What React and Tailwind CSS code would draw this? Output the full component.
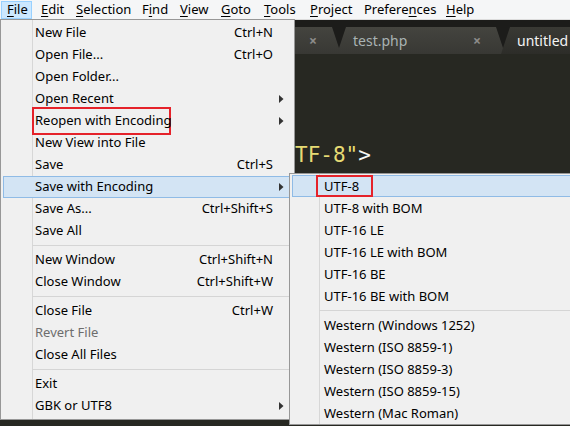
import React from "react";

const FONT = { fontFamily: '"Noto Sans", "Open Sans", sans-serif' };

function Mn({ text, u }) {
  return (
    <span>
      {text.slice(0, u)}
      <span className="underline underline-offset-[2px]">{text[u]}</span>
      {text.slice(u + 1)}
    </span>
  );
}

const barItems = [
  { t: "File", u: 0, w: "w-[31px]", active: true },
  { t: "Edit", u: 0, w: "w-[35px]" },
  { t: "Selection", u: 0, w: "w-[66px]" },
  { t: "Find", u: 1, w: "w-[38px]" },
  { t: "View", u: 0, w: "w-[41px]" },
  { t: "Goto", u: 0, w: "w-[43px]" },
  { t: "Tools", u: 0, w: "w-[46px]" },
  { t: "Project", u: 0, w: "w-[54px]" },
  { t: "Preferences", u: 7, w: "w-[82px]" },
  { t: "Help", u: 0, w: "w-[40px]" },
];

function Arrow() {
  return (
    <svg width="5" height="8" viewBox="0 0 5 8" className="block">
      <path d="M0 0 L4.5 4 L0 8 Z" fill="#333" />
    </svg>
  );
}

function Row({ label, sc, arrow, hl, disabled, box }) {
  return (
    <div
      className={
        "relative mx-[2px] flex h-[22px] items-center border pl-[31px] " +
        (hl ? "border-[#8fbbe6] bg-[#d3e4f4]" : "border-transparent")
      }
    >
      {box && (
        <span className="absolute left-[28px] top-[-4px] h-[28px] w-[139px] border-2 border-[#e5222a]" />
      )}
      <span
        className={
          "relative flex-1 whitespace-nowrap " +
          (disabled ? "text-[#6d6d6d]" : "text-black")
        }
      >
        {label}
      </span>
      <span className="whitespace-nowrap text-black">{sc}</span>
      <span className="flex w-[18px] justify-start pl-[6px]">{arrow && <Arrow />}</span>
    </div>
  );
}

function Sep({ left, h = "h-[7px]" }) {
  return (
    <div className={"flex items-center pr-[2px] " + h + " " + left}>
      <div className="h-px w-full bg-[#d5d5d5]" />
    </div>
  );
}

function SubRow({ label, hl, box }) {
  return (
    <div
      className={
        "relative ml-[2px] flex h-[22px] items-center border border-r-0 pl-[31px] pt-[1px] " +
        (hl ? "border-[#8fbbe6] bg-[#d3e4f4]" : "border-transparent")
      }
    >
      {box && (
        <span className="absolute left-[23px] top-[-1px] h-[22px] w-[57px] border-2 border-[#e5222a]" />
      )}
      <span className="relative whitespace-nowrap text-black">{label}</span>
    </div>
  );
}

function Tab({ label, w, active, first }) {
  return (
    <div
      className={
        "flex h-[27px] shrink-0 items-center justify-between [clip-path:polygon(9px_0,calc(100%-9px)_0,100%_100%,0_100%)] " +
        w +
        (first ? "" : " -ml-[4px]") +
        (active
          ? " bg-[linear-gradient(#393934,#2d2d29)] text-[#f4f4f4]"
          : " bg-[linear-gradient(#44443f,#383834)] text-[#a9b3b3]")
      }
    >
      <span className="pl-[16px] text-[14px]">{label}</span>
      {!active && <span className="pr-[24px] text-[14px] font-bold text-[#8d8d8a]">×</span>}
    </div>
  );
}

export default function App() {
  return (
    <div className="relative h-[426px] w-[570px] overflow-hidden bg-[#272822] text-[13px]" style={FONT}>
      {/* menu bar */}
      <div className="flex h-[20px] items-center border-b border-[#dcdcdc] bg-[#f5f6f7] pl-[1px]">
        {barItems.map((b, i) => (
          <div
            key={b.t}
            className={
              "flex h-[18px] shrink-0 items-center border pl-[5px] text-black " +
              b.w +
              (i === 1 ? " ml-[3px]" : "") +
              (b.active ? " border-[#99d1ff] bg-[#cce8ff]" : " border-transparent")
            }
          >
            <Mn text={b.t} u={b.u} />
          </div>
        ))}
      </div>

      {/* editor */}
      <div className="flex flex-col">
        <div className="flex h-[34px] items-end overflow-hidden bg-[#1c1c1a] pl-[180px]">
          <Tab label="" w="w-[161px]" first />
          <Tab label="test.php" w="w-[168px]" />
          <Tab label="untitled" w="w-[200px]" active />
        </div>
        <div className="h-[400px] bg-[#272822] pl-[295px] pt-[88px]">
          <div
            className="text-[21px] leading-[26px] text-[#e6db74]"
            style={{ fontFamily: '"DejaVu Sans Mono", monospace' }}
          >
            TF-8"<span className="text-[#f8f8f2]">&gt;</span>
          </div>
        </div>
      </div>

      {/* File menu */}
      <div className="absolute left-0 top-[19px] w-[295px] border border-[#979797] bg-[#f0f0f0] pb-[2px] pt-[2px]">
        <div className="absolute bottom-0 left-[31px] top-0 w-px bg-[#d7d7d7]" />
        <div className="relative">
          <Row label="New File" sc="Ctrl+N" />
          <Row label="Open File..." sc="Ctrl+O" />
          <Row label="Open Folder..." />
          <Row label="Open Recent" arrow />
          <Row label="Reopen with Encoding" arrow box />
          <Row label="New View into File" />
          <Row label="Save" sc="Ctrl+S" />
          <Row label="Save with Encoding" arrow hl />
          <Row label="Save As..." sc="Ctrl+Shift+S" />
          <Row label="Save All" />
          <Sep left="pl-[31px]" />
          <Row label="New Window" sc="Ctrl+Shift+N" />
          <Row label="Close Window" sc="Ctrl+Shift+W" />
          <Sep left="pl-[31px]" />
          <Row label="Close File" sc="Ctrl+W" />
          <Row label="Revert File" disabled />
          <Row label="Close All Files" />
          <Sep left="pl-[31px]" />
          <Row label="Exit" />
          <Row label="GBK or UTF8" arrow />
        </div>
      </div>

      {/* Encoding submenu */}
      <div className="absolute left-[289px] top-[173px] w-[300px] border border-[#979797] bg-[#f0f0f0] pt-[1px]">
        <div className="absolute bottom-0 left-[29px] top-0 w-px bg-[#d7d7d7]" />
        <div className="relative">
          <SubRow label="UTF-8" hl box />
          <SubRow label="UTF-8 with BOM" />
          <SubRow label="UTF-16 LE" />
          <SubRow label="UTF-16 LE with BOM" />
          <SubRow label="UTF-16 BE" />
          <SubRow label="UTF-16 BE with BOM" />
          <Sep left="pl-[29px]" />
          <SubRow label="Western (Windows 1252)" />
          <SubRow label="Western (ISO 8859-1)" />
          <SubRow label="Western (ISO 8859-3)" />
          <SubRow label="Western (ISO 8859-15)" />
          <SubRow label="Western (Mac Roman)" />
        </div>
      </div>
    </div>
  );
}
